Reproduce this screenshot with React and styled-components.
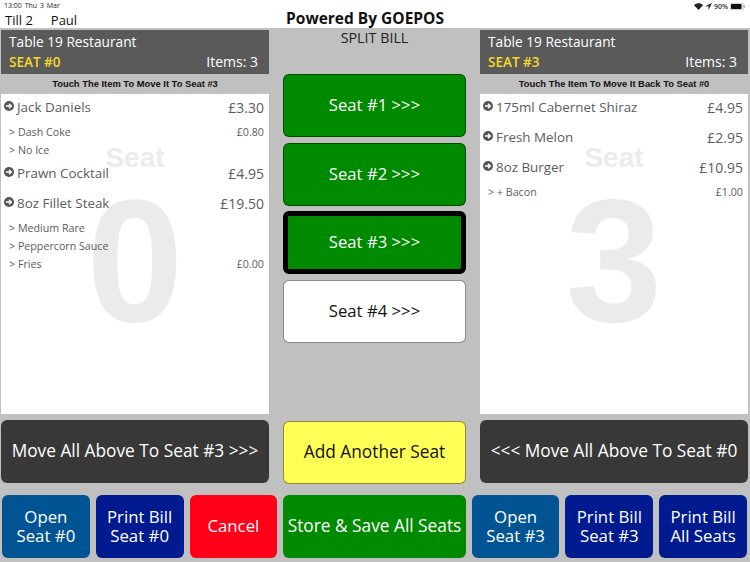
import React from 'react'
import styled, { createGlobalStyle } from 'styled-components'

const GlobalStyle = createGlobalStyle`
  html, body {
    margin: 0;
    padding: 0;
    background: #c0c0c0;
  }
  * {
    box-sizing: border-box;
  }
`

const Page = styled.div`
  width: 750px;
  height: 562px;
  overflow: hidden;
  background: #c0c0c0;
  font-family: "Open Sans", "Noto Sans", sans-serif;
  display: flex;
  flex-direction: column;
`

const TopBar = styled.div`
  height: 28px;
  background: #fff;
  display: grid;
  grid-template-columns: 1fr auto 1fr;
  padding: 0 5px;
  color: #111;
`

const TopLeft = styled.div`
  display: flex;
  flex-direction: column;
`

const StatusText = styled.div`
  font-size: 7px;
  line-height: 8px;
  margin-top: 2px;
  margin-left: -1px;
  color: #222;
  word-spacing: 1px;
`

const TillLine = styled.div`
  display: flex;
  gap: 18px;
  font-size: 13px;
  line-height: 16px;
  margin-top: 2px;
`

const Title = styled.div`
  font-size: 15.500px;
  line-height: 18px;
  font-weight: 700;
  margin-top: 9px;
  margin-right: 20px;
  color: #111;
`

const StatusRight = styled.div`
  display: flex;
  justify-content: flex-end;
  align-items: center;
  gap: 2px;
  height: 12px;
  font-size: 7px;
  font-weight: 600;
  color: #333;
`

const Main = styled.div`
  flex: 1;
  display: grid;
  grid-template-columns: 268px 183px 268px;
  justify-content: space-between;
  padding: 2px 2px 0 1px;
  column-gap: 14px;
`

const Panel = styled.div`
  display: flex;
  flex-direction: column;
`

const PanelHeader = styled.div`
  height: 44px;
  background: #5a5a5a;
  padding: 2px 8px 0;
  color: #fff;
`

const HeaderTitle = styled.div`
  font-size: 13.700px;
  line-height: 20px;
`

const HeaderRow = styled.div`
  display: flex;
  justify-content: space-between;
  font-size: 14px;
  line-height: 20px;
  padding-right: 3px;
`

const SeatLabel = styled.span`
  color: #f7d928;
  font-weight: 600;
  font-size: 13.500px;
`

const Hint = styled.div`
  height: 20px;
  font-family: "Liberation Sans", Arial, sans-serif;
  font-weight: 700;
  font-size: 9.400px;
  line-height: 20px;
  text-align: center;
  color: #111;
`

const List = styled.div`
  position: relative;
  height: 320px;
  background: #fff;
  overflow: hidden;
  color: #5c5c5c;
`

const Watermark = styled.div`
  position: absolute;
  left: 0;
  right: 0;
  top: 46px;
  text-align: center;
  font-family: "Liberation Sans", Arial, sans-serif;
  font-weight: 700;
  color: #ebebeb;
  pointer-events: none;
`

const WatermarkWord = styled.div`
  font-size: 28px;
  line-height: 36px;
`

const WatermarkDigit = styled.div`
  font-size: 174px;
  line-height: 178px;
  margin-top: -4px;
`

const Rows = styled.div`
  position: relative;
  margin-top: -1px;
  padding: 0 5px 0 3px;
`

const ItemRow = styled.div`
  display: flex;
  align-items: center;
  height: 30px;
  font-size: 14px;
  padding-bottom: 2px;
`

const ItemIcon = styled.svg`
  width: 10px;
  height: 10px;
  margin-right: 3px;
  margin-top: -3px;
  flex: none;
`

const ItemName = styled.span`
  flex: 1;
  font-size: 13.400px;
`

const ModName = styled.span`
  flex: 1;
`

const ModRow = styled.div`
  display: flex;
  align-items: center;
  height: 18px;
  font-size: 10.700px;
  padding-left: 5px;
`

const ActionButton = styled.div`
  display: flex;
  align-items: center;
  justify-content: center;
  text-align: center;
  border-radius: 6px;
  padding-bottom: 2px;
  background: ${({ bg }) => bg};
  color: ${({ fg }) => fg || '#fff'};
  border: ${({ edge }) => edge || 'none'};
`

const MoveButton = styled(ActionButton)`
  height: 63px;
  margin-top: 6px;
  font-size: 17.300px;
  white-space: nowrap;
`

const Center = styled.div`
  display: flex;
  flex-direction: column;
`

const SplitLabel = styled.div`
  height: 44px;
  font-size: 14.300px;
  line-height: 16px;
  text-align: center;
  color: #222;
`

const SeatList = styled.div`
  display: flex;
  flex-direction: column;
  gap: 5.700px;
`

const SeatButton = styled(ActionButton)`
  height: 63px;
  font-size: 16.700px;
  border: ${({ selected }) => (selected ? '5px solid #000' : '1px solid rgba(0, 0, 0, 0.45)')};
`

const AddButton = styled(ActionButton)`
  height: 63px;
  margin-top: auto;
  margin-bottom: 11px;
  font-size: 17.300px;
`

const BottomBar = styled.div`
  display: flex;
  gap: 6px;
  padding: 0 3px 4px 2px;
  height: 67px;
`

const BottomButton = styled(ActionButton)`
  width: ${({ wide }) => (wide ? '183px' : '88px')};
  height: 63px;
  font-size: ${({ wide }) => (wide ? '17.300px' : '16.800px')};
  line-height: 19px;
  white-space: nowrap;
`

const ArrowIcon = () => (
  <ItemIcon viewBox="0 0 10 10">
    <circle cx="5" cy="5" r="5" fill="#555" />
    <path d="M2 5h5M5 2.800 7.400 5 5 7.200" fill="none" stroke="#fff" strokeWidth="1.300" />
  </ItemIcon>
)

const Item = ({ name, price }) => (
  <ItemRow>
    <ArrowIcon />
    <ItemName>{name}</ItemName>
    <span>{price}</span>
  </ItemRow>
)

const Mod = ({ name, price }) => (
  <ModRow>
    <ModName>{name}</ModName>
    <span>{price}</span>
  </ModRow>
)

const SeatPanel = ({ seat, hint, move, children }) => (
  <Panel>
    <PanelHeader>
      <HeaderTitle>Table 19 Restaurant</HeaderTitle>
      <HeaderRow>
        <SeatLabel>SEAT #{seat}</SeatLabel>
        <span>Items: 3</span>
      </HeaderRow>
    </PanelHeader>
    <Hint>{hint}</Hint>
    <List>
      <Watermark>
        <WatermarkWord>Seat</WatermarkWord>
        <WatermarkDigit>{seat}</WatermarkDigit>
      </Watermark>
      <Rows>{children}</Rows>
    </List>
    <MoveButton bg="#383838">{move}</MoveButton>
  </Panel>
)

const Wifi = () => (
  <svg width="9" height="7" viewBox="0 0 9 7">
    <path d="M4.500 7 0 2.200C2.500-.4 6.500-.4 9 2.200Z" fill="#222" />
  </svg>
)

const Location = () => (
  <svg width="7" height="7" viewBox="0 0 7 7">
    <path d="M7 0 0 3.200h3.500V7Z" fill="#222" />
  </svg>
)

const Battery = () => (
  <svg width="15" height="7" viewBox="0 0 15 7">
    <rect x="0.250" y="0.250" width="13" height="6.500" rx="1.500" fill="none" stroke="#888" strokeWidth="0.500" />
    <rect x="1" y="1" width="10.600" height="5" rx="0.800" fill="#111" />
    <rect x="13.700" y="2.300" width="1" height="2.400" fill="#888" />
  </svg>
)

export default function App() {
  return (
    <Page>
      <GlobalStyle />
      <TopBar>
        <TopLeft>
          <StatusText>13:00 Thu 3 Mar</StatusText>
          <TillLine>
            <span>Till 2</span>
            <span>Paul</span>
          </TillLine>
        </TopLeft>
        <Title>Powered By GOEPOS</Title>
        <StatusRight>
          <Wifi />
          <Location />
          <span>90%</span>
          <Battery />
        </StatusRight>
      </TopBar>
      <Main>
        <SeatPanel
          seat="0"
          hint="Touch The Item To Move It To Seat #3"
          move="Move All Above To Seat #3 >>>"
        >
          <Item name="Jack Daniels" price="£3.30" />
          <Mod name="> Dash Coke" price="£0.80" />
          <Mod name="> No Ice" />
          <Item name="Prawn Cocktail" price="£4.95" />
          <Item name="8oz Fillet Steak" price="£19.50" />
          <Mod name="> Medium Rare" />
          <Mod name="> Peppercorn Sauce" />
          <Mod name="> Fries" price="£0.00" />
        </SeatPanel>
        <Center>
          <SplitLabel>SPLIT BILL</SplitLabel>
          <SeatList>
            <SeatButton bg="#008a00">Seat #1 &gt;&gt;&gt;</SeatButton>
            <SeatButton bg="#008a00">Seat #2 &gt;&gt;&gt;</SeatButton>
            <SeatButton bg="#008a00" selected>Seat #3 &gt;&gt;&gt;</SeatButton>
            <SeatButton bg="#fff" fg="#111">Seat #4 &gt;&gt;&gt;</SeatButton>
          </SeatList>
          <AddButton bg="#ffff55" fg="#111" edge="1px solid rgba(0, 0, 0, 0.45)">Add Another Seat</AddButton>
        </Center>
        <SeatPanel
          seat="3"
          hint="Touch The Item To Move It Back To Seat #0"
          move="<<< Move All Above To Seat #0"
        >
          <Item name="175ml Cabernet Shiraz" price="£4.95" />
          <Item name="Fresh Melon" price="£2.95" />
          <Item name="8oz Burger" price="£10.95" />
          <Mod name="> + Bacon" price="£1.00" />
        </SeatPanel>
      </Main>
      <BottomBar>
        <BottomButton bg="#005494">Open<br />Seat #0</BottomButton>
        <BottomButton bg="#001a90">Print Bill<br />Seat #0</BottomButton>
        <BottomButton bg="#ff0018">Cancel</BottomButton>
        <BottomButton bg="#008a00" wide>Store &amp; Save All Seats</BottomButton>
        <BottomButton bg="#005494">Open<br />Seat #3</BottomButton>
        <BottomButton bg="#001a90">Print Bill<br />Seat #3</BottomButton>
        <BottomButton bg="#001a90">Print Bill<br />All Seats</BottomButton>
      </BottomBar>
    </Page>
  )
}
